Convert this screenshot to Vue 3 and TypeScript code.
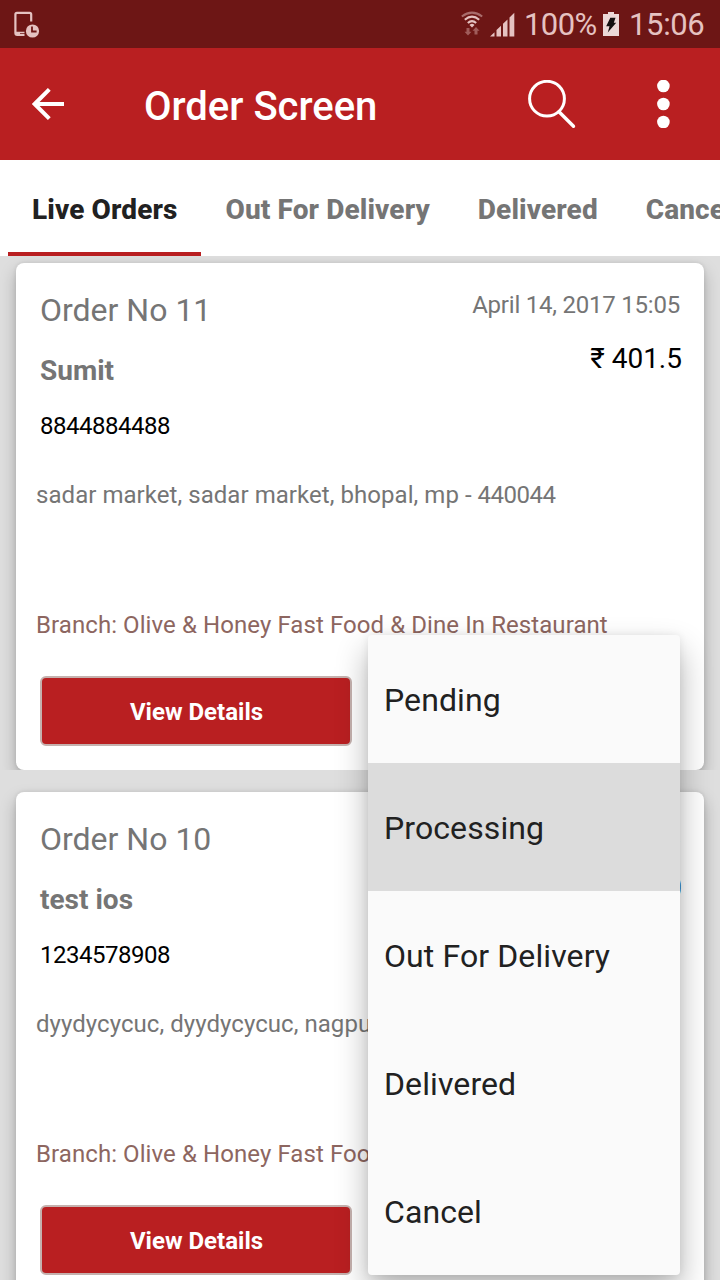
<script setup lang="ts">
interface Order {
  id: number
  customer: string
  phone: string
  address: string
  pin: string
  placed: string
  total: string
}

const tabs: string[] = ['Live Orders', 'Out For Delivery', 'Delivered', 'Cancelled']
const activeTab = 0

const branch = 'Branch: Olive & Honey Fast Food & Dine In Restaurant'

const orders: Order[] = [
  {
    id: 11,
    customer: 'Sumit',
    phone: '8844884488',
    address: 'sadar market, sadar market, bhopal, mp - ',
    pin: '440044',
    placed: 'April 14, 2017 15:05',
    total: '₹ 401.5',
  },
  {
    id: 10,
    customer: 'test ios',
    phone: '1234578908',
    address: 'dyydycycuc, dyydycycuc, nagpur',
    pin: '',
    placed: 'April 14, 2017 14:52',
    total: '₹ 220',
  },
]

const statuses: string[] = ['Pending', 'Processing', 'Out For Delivery', 'Delivered', 'Cancel']
const selected = 'Processing'
</script>

<template>
  <div class="screen">
    <div class="status-bar">
      <svg class="device" width="28" height="28" viewBox="0 0 28 28">
        <path d="M18.200 10.500V3.400q0-1.500-1.500-1.500H3.900q-1.500 0-1.500 1.500v18.700q0 1.800 1.800 1.800H11.500" fill="none" stroke="#e5c2c1" stroke-width="2.200" />
        <path d="M2 20.800h9.500v1.200H7v2H3z" fill="#e5c2c1" />
        <circle cx="19.500" cy="20" r="6.600" fill="#e5c2c1" />
        <path d="M19 15.500v5h4.600" fill="none" stroke="#6d1615" stroke-width="1.800" />
      </svg>
      <div class="indicators">
        <svg class="wifi" width="22" height="26" viewBox="0 0 22 26">
          <g fill="none" stroke="#e5c2c1" stroke-width="2">
            <path d="M.8 5.500Q11-2.200 21.200 5.500" opacity=".5" />
            <path d="M3.800 8.800Q11 2.400 18.200 8.800" />
            <path d="M6.800 12Q11 8.200 15.200 12" />
          </g>
          <path d="M8.500 14Q11 11.600 13.500 14L11 16.500z" fill="#e5c2c1" />
          <path d="M5.500 17h3v3.800H10.500L7 24.600 3.500 20.800h2zM13.500 23.500h3v-3.800H18.500L15 16 11.500 19.700h2z" fill="#a05c5b" />
        </svg>
        <svg class="signal" width="25" height="25" viewBox="0 0 25 25">
          <path d="M0 24.500l4.500-4.300v4.300zM6.500 24.500v-6.500l4.500-4.200v10.700zM13 24.500V11.800l4.500-4.300v17zM19.500 24.500V5.500L24.300.8v23.700z" fill="#e5c2c1" />
        </svg>
        <span class="percent">100%</span>
        <svg class="battery" width="16" height="24" viewBox="0 0 16 24">
          <path d="M0 2h5V0h6v2h5v22H0z" fill="#ecd8d7" />
          <path d="M7.300 5.700h5.200l-1.700 5h2.400L4.800 20.500l1.700-6.200H3.200z" fill="#141010" />
        </svg>
        <span class="clock">15:06</span>
      </div>
    </div>

    <header class="toolbar">
      <svg class="back" width="32" height="32" viewBox="0 0 32 32">
        <path d="M32 16H3M17.300 1.400L2.700 16l14.600 14.600" fill="none" stroke="#fff" stroke-width="4" />
      </svg>
      <h1>Order Screen</h1>
      <svg class="search" width="48" height="49" viewBox="0 0 48 49">
        <circle cx="19" cy="18.700" r="17.400" fill="none" stroke="#fff" stroke-width="3" />
        <path d="M31 31.800L45.500 46.300" fill="none" stroke="#fff" stroke-width="3.400" stroke-linecap="round" />
      </svg>
      <svg class="more" width="14" height="48" viewBox="0 0 14 48">
        <g fill="#fff">
          <circle cx="7.400" cy="6" r="6.300" />
          <circle cx="7.400" cy="24" r="6.300" />
          <circle cx="7.400" cy="42" r="6.300" />
        </g>
      </svg>
    </header>

    <nav class="tabs">
      <div v-for="(tab, i) in tabs" :key="tab" class="tab" :class="{ active: i === activeTab }">{{ tab }}</div>
    </nav>

    <main class="list">
      <section v-for="order in orders" :key="order.id" class="row">
        <article class="card">
          <div class="summary">
            <div>
              <div class="number">Order No {{ order.id }}</div>
              <div class="customer">{{ order.customer }}</div>
              <div class="phone">{{ order.phone }}</div>
            </div>
            <div class="side">
              <div class="placed">{{ order.placed }}</div>
              <div class="total">{{ order.total }}</div>
            </div>
          </div>
          <div class="address">{{ order.address }}<span class="pin">{{ order.pin }}</span></div>
          <div class="branch">{{ branch }}</div>
          <button class="details" type="button">View Details</button>
        </article>
      </section>
    </main>

    <ul class="menu">
      <li v-for="status in statuses" :key="status" :class="{ chosen: status === selected }">{{ status }}</li>
    </ul>
  </div>
</template>

<style>
body {
  margin: 0;
  overflow: hidden;
}
</style>

<style scoped>
.screen {
  position: relative;
  width: 720px;
  height: 1280px;
  overflow: hidden;
  background: #dedede;
  font-family: Roboto, "Noto Sans", sans-serif;
  white-space: nowrap;
}

svg {
  display: block;
  flex: none;
}

.status-bar {
  display: flex;
  justify-content: space-between;
  height: 48px;
  box-sizing: border-box;
  padding: 0 16px 0 13px;
  background: #6d1615;
  color: #e5c2c1;
}

.device {
  margin-top: 11px;
}

.indicators {
  display: flex;
  align-items: flex-start;
  font-size: 31px;
  line-height: 50px;
}

.wifi {
  margin: 11px 7px 0 0;
}

.signal {
  margin: 12px 9px 0 0;
}

.percent {
  width: 73px;
  letter-spacing: -0.6px;
}

.battery {
  margin: 12px 10px 0 6px;
}

.clock {
  width: 75px;
  letter-spacing: -0.35px;
}

.toolbar {
  display: flex;
  align-items: center;
  height: 112px;
  box-sizing: border-box;
  padding: 0 50px 0 32px;
  background: #b91f21;
}

h1 {
  flex: 1;
  margin: 6px 0 0 80px;
  color: #fff;
  font-size: 40px;
  font-weight: 500;
  line-height: 48px;
}

.search {
  margin-right: 80px;
}

.tabs {
  display: flex;
  height: 96px;
  padding-left: 8px;
  overflow: hidden;
  background: #fff;
}

.tab {
  flex: none;
  height: 96px;
  box-sizing: border-box;
  padding: 0 24px;
  border-bottom: 4px solid transparent;
  color: #757575;
  font-size: 28px;
  font-weight: 800;
  letter-spacing: 0.11px;
  line-height: 99px;
}

.tab.active {
  border-color: #b91f21;
  color: #212121;
}

.list {
  opacity: 0.999;
}

.row {
  overflow: hidden;
  padding: 22px 16px 0;
}

.row:first-child {
  padding-top: 7px;
}

.card {
  height: 507px;
  box-sizing: border-box;
  padding: 28px 24px 24px;
  border-radius: 8px;
  background: #fff;
  box-shadow: 0 8px 16px rgba(0, 0, 0, 0.25), 0 0 4px rgba(0, 0, 0, 0.1);
  color: #757575;
  font-size: 24px;
  line-height: 28px;
}

.summary {
  display: flex;
  justify-content: space-between;
}

.number {
  font-size: 32px;
  line-height: 38px;
}

.customer {
  margin-top: 25px;
  font-size: 28px;
  font-weight: 700;
  line-height: 34px;
}

.phone {
  margin-top: 24px;
  color: #000;
  letter-spacing: -0.5px;
}

.side {
  text-align: right;
}

.placed {
  letter-spacing: -0.22px;
}

.total {
  margin: 23px -2px 0 0;
  color: #000;
  font-size: 28px;
  line-height: 34px;
}

.address {
  margin: 41px 0 0 -4px;
  letter-spacing: 0.05px;
}

.pin {
  letter-spacing: -0.5px;
}

.branch {
  margin: 102px 0 0 -4px;
  color: #8d6660;
  letter-spacing: 0.08px;
}

.details {
  display: block;
  width: 312px;
  height: 70px;
  margin: 37px 0 0;
  padding: 2px 0 0 1px;
  border: 2px solid #c5b1ae;
  border-radius: 6px;
  background: #b91f21;
  color: #fff;
  font: 700 24px/28px Roboto, sans-serif;
}

.menu {
  position: absolute;
  top: 635px;
  left: 368px;
  width: 312px;
  margin: 0;
  padding: 0;
  border-radius: 4px;
  background: #fafafa;
  box-shadow: 0 16px 32px rgba(0, 0, 0, 0.3), 0 0 8px rgba(0, 0, 0, 0.08);
  color: #212121;
  font-size: 32px;
  letter-spacing: 0.1px;
  line-height: 130px;
  list-style: none;
}

.menu li {
  height: 128px;
  padding-left: 16px;
}

.menu .chosen {
  background: #dcdcdc;
}
</style>
